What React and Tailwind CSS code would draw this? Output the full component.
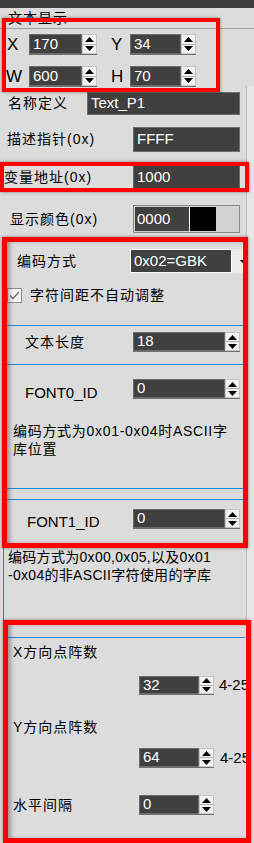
import React from 'react';

const Up = () => (
  <svg width="9" height="5" viewBox="0 0 9 5"><path d="M0 5 L4.5 0 L9 5Z" fill="#000" /></svg>
);
const Down = () => (
  <svg width="9" height="5" viewBox="0 0 9 5"><path d="M0 0 L4.5 5 L9 0Z" fill="#000" /></svg>
);

const Spin = () => (
  <div className="flex flex-col w-[15px] h-full border border-[#c4c4c4] bg-[#f2f2f2]">
    <div className="flex-1 flex items-center justify-center border-b border-[#b0b0b0]">
      <Up />
    </div>
    <div className="flex-1 flex items-center justify-center">
      <Down />
    </div>
  </div>
);

const Field = ({ value, className = '' }) => (
  <div className={`flex items-center bg-[#404040] border border-[#6c6c6c] text-white text-[15px] pl-[3px] ${className}`}>
    {value}
  </div>
);

const Num = ({ value, fieldW, h, className = '' }) => (
  <div className={`flex border-b border-[#707070] ${className}`} style={{ height: h }}>
    <div style={{ width: fieldW }} className="h-full">
      <Field value={value} className="h-full w-full" />
    </div>
    <Spin />
  </div>
);

const Label = ({ children, className = '' }) => (
  <span className={`text-[14px] tracking-[1px] text-black whitespace-nowrap ${className}`}>{children}</span>
);

const Blue = ({ className = '' }) => <div className={`h-px bg-[#1d8bd6] ${className}`} />;

export default function App() {
  return (
    <div
      className="relative w-[254px] h-[843px] overflow-hidden bg-[#dcdcdc] text-black"
      style={{ fontFamily: '"Liberation Sans", Arial, "Noto Sans CJK SC", sans-serif' }}
    >
      {/* right scrollbar strip */}
      <div className="absolute right-0 top-[86px] w-[8px] h-[534px] bg-[#e6e6e6] border-l border-[#bdbdbd]" />

      <div className="h-[8px] bg-[#3c3c3c]" />
      <div className="h-[20px] flex items-center pl-[8px]">
        <Label>文本显示</Label>
      </div>
      <div className="h-px bg-[#a4a4a4]" />

      {/* X Y W H */}
      <div className="pt-[5px] flex flex-col gap-[11px] h-[63px]">
        <div className="flex items-center h-[21px]">
          <span className="w-[29px] pl-[7px] text-[17px]">X</span>
          <Num value="170" fieldW={53} h={21} />
          <span className="w-[33px] pl-[14px] text-[17px]">Y</span>
          <Num value="34" fieldW={51} h={21} />
        </div>
        <div className="flex items-center h-[21px]">
          <span className="w-[29px] pl-[6px] text-[17px]">W</span>
          <Num value="600" fieldW={53} h={21} />
          <span className="w-[33px] pl-[14px] text-[17px]">H</span>
          <Num value="70" fieldW={51} h={21} />
        </div>
      </div>

      <div className="flex items-center h-[23px]">
        <Label className="w-[87px] pl-[8px]">名称定义</Label>
        <Field value="Text_P1" className="w-[153px] h-full" />
      </div>
      <div className="flex items-center h-[25px] mt-[12px]">
        <Label className="w-[133px] pl-[7px]">描述指针(0x)</Label>
        <Field value="FFFF" className="w-[107px] h-full" />
      </div>
      <div className="flex items-center h-[24px] mt-[13px]">
        <Label className="w-[133px] pl-[4px]">变量地址(0x)</Label>
        <Field value="1000" className="w-[107px] h-full" />
      </div>
      <div className="flex items-center h-[28px] mt-[16px]">
        <Label className="w-[133px] pl-[10px]">显示颜色(0x)</Label>
        <div className="w-[107px] h-full flex border border-[#8a8a8a] bg-[#d2d2d2] p-px">
          <div className="w-[54px] bg-[#404040] text-white text-[15px] pl-[2px] flex items-center">0000</div>
          <div className="w-px bg-white" />
          <div className="w-[26px] bg-black" />
        </div>
      </div>

      {/* encoding panel */}
      <div className="mt-[8px] h-[305px] flex flex-col">
        <div className="flex items-center h-[24px] mt-[8px]">
          <Label className="w-[130px] pl-[17px]">编码方式</Label>
          <div className="w-[102px] h-full bg-[#404040] border border-white text-white text-[15px] pl-[3px] flex items-center">0x02=GBK</div>
          <div className="w-[13px] h-full bg-[#ececec] flex items-center justify-end">
            <svg width="5" height="3" viewBox="0 0 5 3"><path d="M0 0 L2.5 3 L5 0Z" fill="#000" /></svg>
          </div>
        </div>
        <div className="flex items-center h-[16px] mt-[14px] pl-[7px]">
          <div className="w-[15px] h-[15px] border border-[#8e8e8e] bg-[#f4f4f4] flex items-center justify-center">
            <svg width="11" height="9" viewBox="0 0 11 9"><path d="M1 4.5 L4 7.5 L10 1" stroke="#6a6a6a" strokeWidth="1.3" fill="none" /></svg>
          </div>
          <Label className="pl-[8px]">字符间距不自动调整</Label>
        </div>
        <Blue className="mt-[22px] ml-[5px] w-[240px]" />
        <div className="flex items-center h-[20px] mt-[6px]">
          <Label className="w-[133px] pl-[25px]">文本长度</Label>
          <Num value="18" fieldW={92} h={20} />
        </div>
        <Blue className="mt-[12px] ml-[5px] w-[240px]" />
        <div className="flex items-center h-[20px] mt-[14px]">
          <span className="w-[133px] pl-[25px] text-[15px] pt-[8px]">FONT0_ID</span>
          <Num value="0" fieldW={92} h={20} />
        </div>
        <div className="mt-[23px] pl-[13px] text-[14px] leading-[18px] tracking-[0.7px] w-[238px]">
          编码方式为0x01-0x04时ASCII字库位置
        </div>
        <Blue className="mt-[30px] ml-[5px] w-[240px]" />
        <Blue className="mt-[10px] ml-[5px] w-[240px]" />
        <div className="flex items-center h-[20px] mt-[9px]">
          <span className="w-[133px] pl-[27px] text-[15px] pt-[6px]">FONT1_ID</span>
          <Num value="0" fieldW={92} h={20} />
        </div>
      </div>

      <div className="ml-[3px] border-l border-[#1d8bd6] h-[91px] pl-[4px] pt-[2px] text-[14px] leading-[18px] tracking-[0.3px]">
        <div className="whitespace-nowrap">编码方式为0x00,0x05,以及0x01</div>
        <div className="whitespace-nowrap">-0x04的非ASCII字符使用的字库</div>
      </div>
      <Blue className="ml-[8px] w-[237px]" />

      {/* dot matrix */}
      <div className="flex flex-col">
        <Label className="pl-[13px] mt-[5px] leading-[18px]">X方向点阵数</Label>
        <div className="flex items-center h-[19px] mt-[15px] pl-[139px]">
          <Num value="32" fieldW={60} h={19} />
          <span className="pl-[5px] text-[15px] whitespace-nowrap">4-25</span>
        </div>
        <Label className="pl-[13px] mt-[23px] leading-[18px]">Y方向点阵数</Label>
        <div className="flex items-center h-[20px] mt-[12px] pl-[139px]">
          <Num value="64" fieldW={60} h={20} />
          <span className="pl-[6px] text-[15px] whitespace-nowrap">4-25</span>
        </div>
        <div className="flex items-center h-[20px] mt-[27px]">
          <Label className="w-[139px] pl-[13px]">水平间隔</Label>
          <Num value="0" fieldW={60} h={20} />
        </div>
      </div>

      {/* red annotation boxes */}
      <div className="absolute left-[2px] top-[18px] w-[218px] h-[74px] border-4 border-[#f00] shadow-[0_0_3px_rgba(0,0,0,0.45)]" />
      <div className="absolute left-0 top-[162px] w-[249px] h-[30px] border-4 border-[#f00] shadow-[0_0_3px_rgba(0,0,0,0.45)]" />
      <div className="absolute left-[2px] top-[237px] w-[246px] h-[311px] border-[5px] border-[#f00] shadow-[0_0_3px_rgba(0,0,0,0.45),inset_4px_0_4px_-1px_rgba(0,0,0,0.3)]" />
      <div className="absolute left-[3px] top-[620px] w-[248px] h-[223px] border-[5px] border-[#f00] shadow-[0_0_3px_rgba(0,0,0,0.45),inset_4px_0_4px_-1px_rgba(0,0,0,0.3)]" />
    </div>
  );
}
